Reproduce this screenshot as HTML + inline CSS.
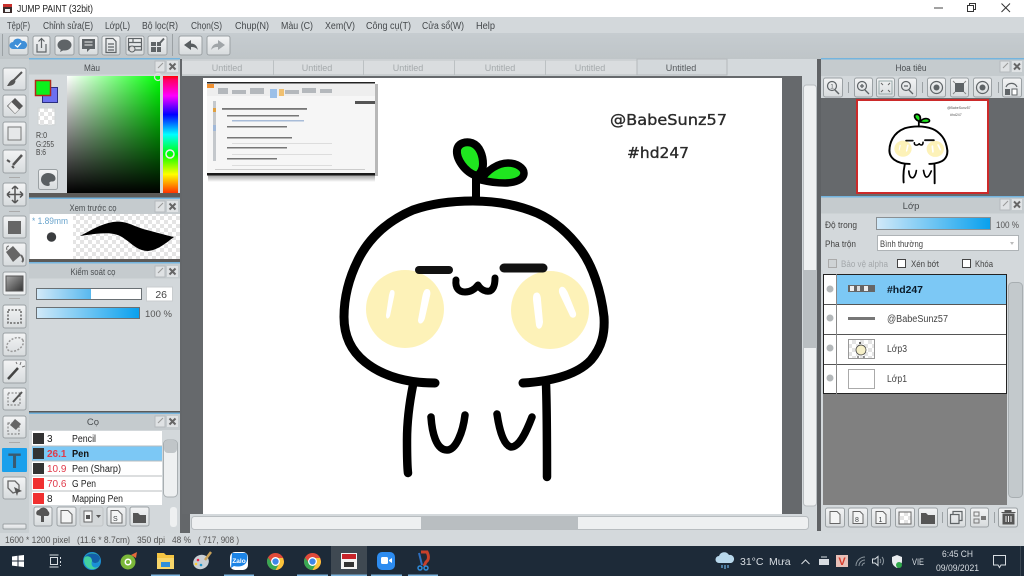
<!DOCTYPE html>
<html><head><meta charset="utf-8"><style>
html,body{margin:0;padding:0;background:#d4d9dc;overflow:hidden}
svg{display:block}
text{font-family:"Liberation Sans","Noto Sans CJK SC",sans-serif;font-size:9.5px;fill:#3c4043}
.b{fill:url(#btn);stroke:#9ba1a4;stroke-width:1}
.i{fill:#5f6467;stroke:none}
.s{fill:none;stroke:#5f6467;stroke-width:1.2}
.h{text-anchor:middle;fill:#4a4e51;font-size:9.5px}
.sep{stroke:#9ba1a4;stroke-width:1}
.tab{fill:#a4a9ab;text-anchor:middle;font-size:9px}
.m{font-size:10px;fill:#44484b}
.l{font-size:10px;fill:#222}
</style></head><body>
<svg width="1024" height="576" viewBox="0 0 1024 576" xmlns="http://www.w3.org/2000/svg">
<defs>
<linearGradient id="btn" x1="0" y1="0" x2="0" y2="1"><stop offset="0" stop-color="#f3f4f5"/><stop offset="1" stop-color="#d7dbdd"/></linearGradient>
<linearGradient id="tb" x1="0" y1="0" x2="0" y2="1"><stop offset="0" stop-color="#c6ccd0"/><stop offset="1" stop-color="#bfc5c8"/></linearGradient>
<linearGradient id="wg" x1="0" y1="0" x2="1" y2="0"><stop offset="0" stop-color="#fff"/><stop offset="1" stop-color="#00ff06"/></linearGradient>
<linearGradient id="bk" x1="0" y1="0" x2="0" y2="1"><stop offset="0" stop-color="#000" stop-opacity="0"/><stop offset="1" stop-color="#000"/></linearGradient>
<linearGradient id="hue" x1="0" y1="0" x2="0" y2="1"><stop offset="0" stop-color="#f00"/><stop offset=".03" stop-color="#ff0060"/><stop offset=".17" stop-color="#f0f"/><stop offset=".33" stop-color="#00f"/><stop offset=".5" stop-color="#0ff"/><stop offset=".67" stop-color="#0f0"/><stop offset=".84" stop-color="#ff0"/><stop offset="1" stop-color="#f30"/></linearGradient>
<linearGradient id="sl" x1="0" y1="0" x2="1" y2="0"><stop offset="0" stop-color="#d2e9f8"/><stop offset="1" stop-color="#08a0ee"/></linearGradient>
<linearGradient id="sl2" x1="0" y1="0" x2="1" y2="0"><stop offset="0" stop-color="#d2e9f8"/><stop offset="1" stop-color="#58b8ee"/></linearGradient>
<linearGradient id="gr" x1="0" y1="0" x2="1" y2="1"><stop offset="0" stop-color="#aaa"/><stop offset="1" stop-color="#333"/></linearGradient>
<linearGradient id="sh" x1="0" y1="0" x2="0" y2="1"><stop offset="0" stop-color="#000" stop-opacity=".5"/><stop offset="1" stop-color="#000" stop-opacity="0"/></linearGradient>
<pattern id="ck" width="8" height="8" patternUnits="userSpaceOnUse"><rect width="8" height="8" fill="#fff"/><rect width="4" height="4" fill="#e4e4e4"/><rect x="4" y="4" width="4" height="4" fill="#e4e4e4"/></pattern>
<g id="art">
<circle cx="405" cy="309" r="39" fill="#fdf2b8"/><circle cx="550" cy="310" r="39" fill="#fdf2b8"/>
<g fill="#fff"><path d="M392 290C395 290 395 293 394 297L390 316C388 320 386 319 386 315L389 295C390 292 390 290 392 290Z"/><path d="M427 289C430 289 431 292 430 296L425 318C423 325 418 325 418 320L422 298C423 293 424 289 427 289Z"/><path d="M535 293C539 291 541 295 541 300L543 322C542 331 537 330 536 325L533 300C533 297 533 294 535 293Z"/><path d="M561 287C564 286 566 289 568 293L576 313C577 318 572 319 570 316L560 295C558 291 559 288 561 287Z"/></g>
<g fill="none" stroke="#000" stroke-linecap="round" stroke-linejoin="round">
<path d="M435 383C410 383 385 378 365 362C350 350 344 335 344 317C344 300 348 280 358 260C368 240 385 222 413 210C433 203 453 201 473 201C497 201 518 205 537 213C555 221 570 235 581 250C592 265 601 290 604 317C605 333 602 347 591 360C578 374 555 381 523 383" stroke-width="9"/>
<path d="M476 201L476 178" stroke-width="8"/>
<path d="M477 176C464 172 456 158 457 150C458 143 466 141 472 143C480 146 483 156 483 164C483 169 481 173 477 176Z" fill="#1fe61f" stroke-width="8"/>
<path d="M481 180C487 170 498 163 508 163C517 163 524 168 524 173C524 180 514 183 505 183C497 183 489 182 481 180Z" fill="#1fe61f" stroke-width="7.500"/>
<path d="M419 270H449" stroke="#111" stroke-width="8"/><path d="M504 268H543" stroke="#111" stroke-width="9"/>
<path d="M456 280C455 288 459 292 465 292C471 292 475 289 478 285C481 290 486 292 490 291C494 289 495 283 495 278" stroke-width="7"/>
<path d="M413 385C409 405 407 425 407 440C407 455 407 465 408 473" stroke-width="8.5"/>
<path d="M546 384C547 410 547 445 547 477" stroke-width="8.5"/>
<path d="M431 417C432 432 436 450 447 450C456 450 463 432 465 415" stroke-width="7.5"/>
<path d="M497 414C499 428 503 445 511 447C520 447 527 430 532 417" stroke-width="7.5"/>
</g></g>
</defs>

<!-- base -->
<rect width="1024" height="576" fill="#d4d9dc"/>
<rect width="1024" height="17" fill="#fff"/>
<rect y="17" width="1024" height="16" fill="#d3d8db"/>
<rect y="33" width="1024" height="26" fill="url(#tb)"/>

<!-- title -->
<rect x="3" y="4" width="9" height="9" fill="#3a2b2b"/><rect x="3" y="4" width="9" height="3" fill="#c9302c"/><rect x="5" y="9" width="5" height="3" fill="#eee"/>
<text x="17" y="12" style="font-size:10.5px;fill:#222" textLength="76" lengthAdjust="spacingAndGlyphs">JUMP PAINT (32bit)</text>
<path d="M934 8H943" stroke="#444" stroke-width="1"/>
<path d="M967.5 5.5H973.5V11.5H967.5ZM969.5 5.5V3.5H975.5V9.5H973.5" fill="none" stroke="#333" stroke-width="1"/>
<path d="M1001.5 3.5L1010 12M1010 3.5L1001.5 12" stroke="#333" stroke-width="1"/>

<!-- menu -->
<g>
<text class="m" x="7" y="29" textLength="23" lengthAdjust="spacingAndGlyphs">Tệp(F)</text><text class="m" x="43" y="29" textLength="50" lengthAdjust="spacingAndGlyphs">Chỉnh sửa(E)</text><text class="m" x="105" y="29" textLength="25" lengthAdjust="spacingAndGlyphs">Lớp(L)</text><text class="m" x="142" y="29" textLength="36" lengthAdjust="spacingAndGlyphs">Bộ lọc(R)</text><text class="m" x="191" y="29" textLength="31" lengthAdjust="spacingAndGlyphs">Chọn(S)</text><text class="m" x="235" y="29" textLength="34" lengthAdjust="spacingAndGlyphs">Chụp(N)</text><text class="m" x="281" y="29" textLength="32" lengthAdjust="spacingAndGlyphs">Màu (C)</text><text class="m" x="325" y="29" textLength="30" lengthAdjust="spacingAndGlyphs">Xem(V)</text><text class="m" x="366" y="29" textLength="45" lengthAdjust="spacingAndGlyphs">Công cụ(T)</text><text class="m" x="422" y="29" textLength="42" lengthAdjust="spacingAndGlyphs">Cửa sổ(W)</text><text class="m" x="476" y="29" textLength="19" lengthAdjust="spacingAndGlyphs">Help</text>
</g>

<!-- top toolbar -->
<path d="M2.5 34V56M172.5 34V56" class="sep"/>
<rect class="b" x="9" y="36" width="19" height="19" rx="2"/><path d="M13 49a3.5 3.5 0 0 1 0-7 5 5 0 0 1 9-1 4 4 0 0 1 2 8Z" fill="#3f8fd8"/><path d="M15 45l2.500 2 3.500-4" stroke="#fff" fill="none" stroke-width="1.300"/>
<rect class="b" x="33" y="36" width="17" height="19" rx="2"/><path d="M37 44V52H46V44M41.500 48V39M38.500 41.500L41.500 38.500L44.500 41.500" class="s"/>
<rect class="b" x="55" y="36" width="19" height="19" rx="2"/><ellipse cx="64.500" cy="45" rx="7" ry="5.500" class="i"/><path d="M61 49l-1 3 4-2Z" class="i"/>
<rect class="b" x="79" y="36" width="19" height="19" rx="2"/><path d="M82 39H95V49H90L87 52V49H82Z" class="i"/><path d="M84.500 42H92.500M84.500 45H92.500" stroke="#eee"/>
<rect class="b" x="102" y="36" width="18" height="19" rx="2"/><path d="M106 38.500H113L116 41.500V52.500H106Z M108 44H114M108 47H114M108 50H114" class="s"/>
<rect class="b" x="126" y="36" width="18" height="19" rx="2"/><path d="M128.500 38.500H141.500V50H128.500ZM128.500 42.500H141.500M128.500 46.500H141.500M133 38.500V42.500" class="s"/><circle cx="132" cy="49" r="3" fill="#ddd" stroke="#5f6467"/>
<rect class="b" x="148" y="36" width="19" height="19" rx="2"/><path d="M151 42H156V46H151ZM157 42H161V46H157ZM151 47H156V52H151ZM157 47H161V52H157Z" class="i"/><path d="M159 44L164 38.500" stroke="#5f6467" stroke-width="2"/>
<rect class="b" x="179" y="36" width="23" height="19" rx="2"/><path d="M184 45L191 40V43.500C195 43.500 197 46 198 50C196 47.500 194 47 191 47V50Z" fill="#585d60"/>
<rect class="b" x="207" y="36" width="23" height="19" rx="2"/><path d="M225 45L218 40V43.500C214 43.500 212 46 211 50C213 47.500 215 47 218 47V50Z" fill="#a0a5a8"/>

<!-- left tools col -->
<rect x="0" y="59" width="29" height="474" fill="#c9cfd2"/>
<rect class="b" x="3" y="68" width="23" height="22" rx="2"/><path d="M22 72L13 81" stroke="#555" stroke-width="2"/><path d="M14 79C10 80 9 83 7 86C11 86 15 85 15.500 81Z" fill="#555"/>
<rect class="b" x="3" y="95" width="23" height="22" rx="2"/><path d="M15 98L23 106L15 114L7 106Z" fill="#555"/><path d="M11.500 102L19 109.500L15 113.500L8 106Z" fill="#eee"/>
<rect class="b" x="3" y="122" width="23" height="23" rx="2"/><rect x="8" y="127" width="13" height="13" fill="#e6e8e9" stroke="#777"/>
<rect class="b" x="3" y="150" width="23" height="23" rx="2"/><path d="M22 155L13 165" stroke="#555" stroke-width="2.500"/><path d="M7 160l3 2M12 166l2 2" stroke="#555" stroke-width="2"/>
<path d="M9 177.500H20" stroke="#aaa"/>
<rect class="b" x="3" y="183" width="23" height="23" rx="2"/><path d="M15 186V203M7 194.500H23M15 186l-3 3M15 186l3 3M15 203l-3-3M15 203l3-3M7 194.500l3-3M7 194.500l3 3M23 194.500l-3-3M23 194.500l-3 3" stroke="#555" fill="none" stroke-width="1.500"/>
<path d="M9 211.500H20" stroke="#aaa"/>
<rect class="b" x="3" y="216" width="23" height="22" rx="2"/><rect x="8" y="221" width="13" height="13" fill="#666"/>
<rect class="b" x="3" y="243" width="23" height="23" rx="2"/><path d="M6 252L13 246L21 255L13 262Z" fill="#666"/><path d="M21 255C23 258 24 260 22 262" stroke="#666" fill="none" stroke-width="2"/><path d="M9 246C7 246 6 248 7 250" stroke="#666" fill="none"/>
<rect class="b" x="3" y="272" width="23" height="23" rx="2" style="fill:#eef0f1"/><rect x="6" y="276" width="17" height="15" fill="url(#gr)" stroke="#555"/>
<path d="M9 298.500H20" stroke="#aaa"/>
<rect class="b" x="3" y="305" width="23" height="23" rx="2"/><rect x="8" y="310" width="13" height="13" fill="none" stroke="#666" stroke-dasharray="2 1.500" stroke-width="1.500"/>
<rect class="b" x="3" y="333" width="23" height="23" rx="2"/><ellipse cx="15" cy="344.500" rx="9" ry="6" transform="rotate(-30 15 344.500)" fill="none" stroke="#999" stroke-dasharray="2 1.500" stroke-width="1.500"/>
<rect class="b" x="3" y="360" width="23" height="23" rx="2"/><path d="M8 379L18 368" stroke="#444" stroke-width="2.500"/><path d="M20 365l1-3M22 367l3-1M17 364l-1-2" stroke="#777"/>
<rect class="b" x="3" y="388" width="23" height="22" rx="2"/><rect x="8" y="393" width="12" height="12" fill="none" stroke="#777" stroke-dasharray="2 1.500"/><path d="M13 402L22 392" stroke="#555" stroke-width="2"/>
<rect class="b" x="3" y="416" width="23" height="22" rx="2"/><rect x="8" y="423" width="11" height="11" fill="none" stroke="#777" stroke-dasharray="2 1.500"/><path d="M15 419L21 424L16 430L10 425Z" fill="#666"/>
<path d="M9 442.500H20" stroke="#aaa"/>
<rect x="2" y="448" width="25" height="24" rx="1" fill="#1aa0ec"/><text x="14.500" y="468" text-anchor="middle" style="font-size:21px;fill:#3a5a70;font-weight:bold">T</text>
<rect class="b" x="3" y="477" width="23" height="22" rx="2"/><path d="M8 481H15L19 485V491L13 493L8 488Z" fill="none" stroke="#666" stroke-width="1.300"/><path d="M14 487L22 491L18 492.500L17 496Z" fill="#555"/>
<rect class="b" x="3" y="524" width="23" height="5" rx="1"/>

<!-- dark gutter -->
<rect x="180" y="59" width="10" height="474" fill="#64676a"/>

<!-- panels background -->
<rect x="29" y="59" width="151" height="474" fill="#d3d8db"/>
<rect x="29" y="58" width="151" height="1.500" fill="#74b4de"/>
<rect x="29" y="59.500" width="151" height="15" fill="#c5cbce"/>
<text class="h" x="92" y="71" textLength="16" lengthAdjust="spacingAndGlyphs">Màu</text>
<rect x="155" y="61" width="10" height="11" fill="#dfe2e4" stroke="#b5babd"/><path d="M158 68L163 63" stroke="#999"/>
<rect x="167" y="61" width="11" height="11" fill="#dfe2e4"/><path d="M169.500 63.500L175.500 69.500M175.500 63.500L169.500 69.500" stroke="#666" stroke-width="2"/>
<rect x="67" y="76" width="93" height="117" fill="url(#wg)"/><rect x="67" y="76" width="93" height="117" fill="url(#bk)"/>
<rect x="163" y="76" width="15" height="117" fill="url(#hue)"/>
<circle cx="170" cy="154" r="4" fill="none" stroke="#eee" stroke-width="1.500"/>
<circle cx="158" cy="77" r="3.500" fill="none" stroke="#ddd" stroke-width="1.300"/>
<rect x="42.500" y="87.500" width="15" height="15" fill="#6c70f0" stroke="#2a2e80"/>
<rect x="35.500" y="80.500" width="15" height="15" fill="#0cf01c" stroke="#b02818" stroke-width="1.500"/>
<rect x="38" y="108" width="17" height="17" fill="url(#ck)" stroke="#cfd3d5"/>
<text x="36" y="138" style="font-size:8.5px;fill:#444" textLength="11" lengthAdjust="spacingAndGlyphs">R:0</text><text x="36" y="147" style="font-size:8.5px;fill:#444" textLength="18" lengthAdjust="spacingAndGlyphs">G:255</text><text x="36" y="155" style="font-size:8.5px;fill:#444" textLength="10" lengthAdjust="spacingAndGlyphs">B:6</text>
<rect class="b" x="38.500" y="169.500" width="19" height="20" rx="2"/><path d="M48 173a7 6.500 0 1 0 0 13c2 0 2-1.500 1.500-2.500c-.5-1.500 1-2 2.500-2c2 0 3.500-1 3.500-3c0-3.500-3.500-5.500-7.500-5.500Z" fill="#5a5f62"/>

<!-- preview brush -->
<rect x="29" y="193" width="151" height="4.500" fill="#5c5a58"/><rect x="29" y="197.500" width="151" height="1.500" fill="#74b4de"/>
<rect x="29" y="199" width="151" height="15" fill="#c5cbce"/>
<text class="h" x="93" y="211" textLength="47" lengthAdjust="spacingAndGlyphs">Xem trước cọ</text>
<rect x="155" y="201" width="10" height="11" fill="#dfe2e4" stroke="#b5babd"/><path d="M158 208L163 203" stroke="#999"/>
<rect x="167" y="201" width="11" height="11" fill="#dfe2e4"/><path d="M169.500 203.500L175.500 209.500M175.500 203.500L169.500 209.500" stroke="#666" stroke-width="2"/>
<rect x="30" y="214" width="43" height="45" fill="#fff"/>
<rect x="73" y="214" width="107" height="45" fill="url(#ck)"/>
<text x="32" y="224" style="font-size:9px;fill:#6aa4cc" textLength="36" lengthAdjust="spacingAndGlyphs">* 1.89mm</text>
<circle cx="51.500" cy="237" r="4.700" fill="#3a3c3e"/>
<path d="M80 236C90 231 100 224 113 222C125 220 133 226 143 229C155 232 165 235 174 237C166 243 158 250 148 251C136 251 130 241 120 236C110 231 95 234 80 236Z" fill="#000"/>

<!-- brush control -->
<rect x="29" y="259" width="151" height="3" fill="#5c5a58"/><rect x="29" y="262" width="151" height="1.500" fill="#74b4de"/>
<rect x="29" y="263.500" width="151" height="15" fill="#c5cbce"/>
<text class="h" x="93" y="275" textLength="45" lengthAdjust="spacingAndGlyphs">Kiểm soát cọ</text>
<rect x="155" y="266" width="10" height="11" fill="#dfe2e4" stroke="#b5babd"/><path d="M158 273L163 268" stroke="#999"/>
<rect x="167" y="266" width="11" height="11" fill="#dfe2e4"/><path d="M169.500 268.500L175.500 274.500M175.500 268.500L169.500 274.500" stroke="#666" stroke-width="2"/>
<rect x="36.500" y="288.500" width="105" height="11" fill="#fff" stroke="#6a7074"/><rect x="37" y="289" width="54" height="10" fill="url(#sl2)"/>
<rect x="146.500" y="287" width="26" height="14" fill="#fff" stroke="#c9cdcf"/><text x="167" y="298" text-anchor="end" style="font-size:10.500px;fill:#444">26</text>
<rect x="36.500" y="307.500" width="103" height="11" fill="url(#sl)" stroke="#6a7074"/>
<text x="145" y="317" style="font-size:9.500px;fill:#555" textLength="27" lengthAdjust="spacingAndGlyphs">100 %</text>

<!-- brushes -->
<rect x="29" y="411" width="151" height="1.500" fill="#5c5a58"/><rect x="29" y="412.500" width="151" height="1.500" fill="#74b4de"/>
<rect x="29" y="414" width="151" height="16" fill="#c5cbce"/>
<text class="h" x="93" y="425">Cọ</text>
<rect x="155" y="416" width="10" height="11" fill="#dfe2e4" stroke="#b5babd"/><path d="M158 423L163 418" stroke="#999"/>
<rect x="167" y="416" width="11" height="11" fill="#dfe2e4"/><path d="M169.500 418.500L175.500 424.500M175.500 418.500L169.500 424.500" stroke="#666" stroke-width="2"/>
<rect x="32" y="431" width="130" height="74" fill="#fff"/>
<rect x="32" y="446" width="130" height="15" fill="#7cc8f5"/>
<path d="M32 446H162M32 461H162M32 476H162M32 491H162" stroke="#b9bdbf"/>
<rect x="33" y="433" width="11" height="11" fill="#333"/><rect x="33" y="448" width="11" height="11" fill="#333"/><rect x="33" y="463" width="11" height="11" fill="#333"/><rect x="33" y="478" width="11" height="11" fill="#f03030"/><rect x="33" y="493" width="11" height="11" fill="#f03030"/>
<text x="47" y="442" class="l">3</text><text x="72" y="442" class="l" textLength="24" lengthAdjust="spacingAndGlyphs">Pencil</text>
<text x="47" y="457" style="font-size:10px;fill:#e03a4a;font-weight:bold">26.1</text><text x="72" y="457" style="font-size:10px;fill:#111;font-weight:bold" textLength="17" lengthAdjust="spacingAndGlyphs">Pen</text>
<text x="47" y="472" style="font-size:10px;fill:#e03a4a">10.9</text><text x="72" y="472" class="l" textLength="49" lengthAdjust="spacingAndGlyphs">Pen (Sharp)</text>
<text x="47" y="487" style="font-size:10px;fill:#e03a4a">70.6</text><text x="72" y="487" class="l" textLength="24" lengthAdjust="spacingAndGlyphs">G Pen</text>
<text x="47" y="502" class="l">8</text><text x="72" y="502" class="l" textLength="51" lengthAdjust="spacingAndGlyphs">Mapping Pen</text>
<rect x="163.500" y="440" width="14" height="57" rx="4" fill="#eef0f1" stroke="#a8aeb1"/><rect x="164" y="440" width="13" height="13" rx="4" fill="#c0c5c8"/>
<rect x="170" y="507" width="7" height="20" rx="3" fill="#eef0f1"/>
<rect class="b" x="34" y="507" width="18" height="19" rx="2"/><path d="M37 515a3 3 0 0 1 2-5a5 5 0 0 1 9 1a3 3 0 0 1 0 5H44V522H41V516Z" fill="#555"/>
<rect class="b" x="57" y="507" width="19" height="19" rx="2"/><path d="M61 510.500H68L72 514.500V523H61Z" fill="#f4f5f5" stroke="#666"/>
<rect class="b" x="80" y="507" width="23" height="19" rx="2" style="fill:#d3d7d9;stroke:#c0c4c6"/><path d="M84 511H92V522H84Z" fill="#f4f5f5" stroke="#666"/><rect x="86" y="515" width="4" height="4" fill="#555"/><path d="M96 515H101L98.500 518Z" fill="#555"/>
<rect class="b" x="107" y="507" width="19" height="19" rx="2"/><path d="M111 510.500H118L122 514.500V523H111Z" fill="#f4f5f5" stroke="#666"/><text x="113" y="521" style="font-size:7px">S</text>
<rect class="b" x="130" y="507" width="19" height="19" rx="2"/><path d="M133 513H138L140 515H146V523H133Z" fill="#555"/>

<!-- status bar -->
<rect x="0" y="533" width="1024" height="13" fill="#d4d9dc"/>
<text x="5" y="543" style="font-size:9.500px;fill:#555" textLength="65" lengthAdjust="spacingAndGlyphs">1600 * 1200 pixel</text><text x="77" y="543" style="font-size:9.500px;fill:#555" textLength="53" lengthAdjust="spacingAndGlyphs">(11.6 * 8.7cm)</text><text x="137" y="543" style="font-size:9.500px;fill:#555" textLength="28" lengthAdjust="spacingAndGlyphs">350 dpi</text><text x="172" y="543" style="font-size:9.500px;fill:#555" textLength="19" lengthAdjust="spacingAndGlyphs">48 %</text><text x="198" y="543" style="font-size:9.500px;fill:#555" textLength="41" lengthAdjust="spacingAndGlyphs">( 717, 908 )</text>

<!-- tabs -->
<rect x="182" y="59" width="636" height="17" fill="#d4d9dc"/>
<rect x="182" y="60" width="455" height="15" fill="#dadddf"/>
<path d="M273.500 60V75M363.500 60V75M454.500 60V75M545.500 60V75" stroke="#bcc1c3"/>
<path d="M182 60H637" stroke="#c3c8ca"/><path d="M182 75H637" stroke="#b9bec0"/>
<rect x="637" y="59" width="90" height="16" fill="#d3d8db" stroke="#b4b9bb"/>
<text class="tab" x="227" y="71">Untitled</text><text class="tab" x="317" y="71">Untitled</text><text class="tab" x="408" y="71">Untitled</text><text class="tab" x="500" y="71">Untitled</text><text class="tab" x="590" y="71">Untitled</text><text class="tab" x="681" y="71" style="fill:#55595c">Untitled</text>

<!-- canvas area -->
<rect x="182" y="76" width="620" height="441" fill="#66696c"/>
<rect x="203" y="78" width="579" height="436" fill="#fff"/>
<!-- sticker -->
<rect x="208" y="173" width="167" height="9" fill="url(#sh)"/>
<rect x="375" y="84" width="3" height="92" fill="#888" opacity=".6"/>
<rect x="207" y="82" width="168" height="93" fill="#f6f6f6"/>
<rect x="207" y="82" width="168" height="1.500" fill="#222"/><rect x="207" y="173" width="168" height="2.500" fill="#1a1a1a"/>
<rect x="207" y="84" width="168" height="12" fill="#eeeeee"/><rect x="207" y="84" width="7" height="4" fill="#f09030"/>
<g fill="#b4b8bc"><rect x="218" y="88" width="10" height="6"/><rect x="232" y="90" width="14" height="4"/><rect x="250" y="88" width="14" height="6"/><rect x="285" y="90" width="14" height="4"/><rect x="302" y="88" width="14" height="5"/><rect x="320" y="89" width="12" height="4"/></g>
<rect x="270" y="89" width="7" height="9" fill="#9cc0e8"/><rect x="279" y="89" width="5" height="7" fill="#f0c070"/>
<rect x="213" y="101" width="3" height="60" fill="#c4c8cc"/><rect x="213" y="108" width="3" height="4" fill="#e0a040"/><rect x="213" y="125" width="3" height="6" fill="#a0b8d8"/>
<rect x="355" y="101" width="20" height="3" fill="#555"/>
<g fill="#777"><rect x="222" y="108" width="85" height="1.800"/><rect x="227" y="115" width="72" height="1.500"/><rect x="232" y="120" width="72" height="1.500" fill="#a8bcd8"/><rect x="227" y="126" width="60" height="1.500"/><rect x="227" y="137" width="65" height="1.500"/><rect x="227" y="147" width="60" height="1.500"/><rect x="227" y="158" width="50" height="1.500"/></g>
<g fill="#ddd"><rect x="232" y="143" width="100" height="1"/><rect x="232" y="154" width="100" height="1"/><rect x="232" y="165" width="100" height="1"/></g>
<rect x="215" y="169" width="150" height="1" fill="#ccc"/>
<text x="610" y="125" style="font-size:15.500px;fill:#2a2a2a;stroke:#2a2a2a;stroke-width:.35;font-family:'DejaVu Sans',sans-serif" textLength="117" lengthAdjust="spacingAndGlyphs">@BabeSunz57</text>
<text x="627" y="158" style="font-size:15.500px;fill:#2a2a2a;stroke:#2a2a2a;stroke-width:.35;font-family:'DejaVu Sans',sans-serif" textLength="62" lengthAdjust="spacingAndGlyphs">#hd247</text>
<use href="#art"/>

<!-- v scrollbar -->
<rect x="802" y="76" width="16" height="455" fill="#d4d9dc"/>
<rect x="803.500" y="85" width="13" height="421" rx="3" fill="#eef0f1" stroke="#b8bdc0"/>
<rect x="804" y="270" width="12" height="78" fill="#b9bec1"/>
<!-- h scrollbar -->
<rect x="182" y="514" width="636" height="19" fill="#d4d9dc"/>
<rect x="191.500" y="516.500" width="617" height="13" rx="3" fill="#eef0f1" stroke="#b8bdc0"/>
<rect x="421" y="517" width="157" height="12" fill="#b9bec1"/>
<rect x="180" y="514" width="10" height="19" fill="#64676a"/>
<rect x="817" y="59" width="4" height="472" fill="#5f6265"/>

<!-- right panel -->
<rect x="821" y="59" width="203" height="474" fill="#d3d8db"/>
<rect x="821" y="58" width="203" height="1.500" fill="#74b4de"/>
<rect x="821" y="59.500" width="203" height="17" fill="#c5cbce"/>
<text class="h" x="911" y="71" textLength="31" lengthAdjust="spacingAndGlyphs">Hoa tiêu</text>
<rect x="1000" y="61" width="10" height="11" fill="#dfe2e4" stroke="#b5babd"/><path d="M1003 68L1008 63" stroke="#999"/>
<rect x="1012" y="61" width="10" height="11" fill="#dfe2e4"/><path d="M1014 63.500L1020 69.500M1020 63.500L1014 69.500" stroke="#666" stroke-width="2"/>
<rect x="821" y="76" width="203" height="22" fill="#d3d8db"/>
<rect class="b" x="823.500" y="78" width="19" height="19" rx="2"/><circle cx="832" cy="86" r="4.500" class="s"/><path d="M835 90L839 94" stroke="#5f6467" stroke-width="1.500"/><text x="830.300" y="88.500" style="font-size:6.500px;fill:#5f6467">1</text>
<path d="M848.500 82V93M922.500 82V93M998.500 82V93" class="sep"/>
<rect class="b" x="854.500" y="78" width="18" height="19" rx="2"/><circle cx="862" cy="86" r="4.500" class="s"/><path d="M865 90L869 94M860 86H864M862 84V88" stroke="#5f6467" stroke-width="1.300"/>
<rect class="b" x="876.500" y="78" width="18" height="19" rx="2"/><rect x="879" y="81" width="13" height="13" fill="none" stroke="#9aa"/><path d="M881 83l2 2M890 83l-2 2M881 92l2-2M890 92l-2-2" stroke="#666"/>
<rect class="b" x="898.500" y="78" width="18" height="19" rx="2"/><circle cx="906" cy="86" r="4.500" class="s"/><path d="M909 90L913 94M904 86H908" stroke="#5f6467" stroke-width="1.300"/>
<rect class="b" x="927.500" y="78" width="18" height="19" rx="2"/><circle cx="936.500" cy="87.500" r="6" class="s" stroke-width="1.500"/><circle cx="936.500" cy="87.500" r="3" class="i"/>
<rect class="b" x="950.500" y="78" width="18" height="19" rx="2"/><rect x="955" y="83" width="9" height="9" class="i"/><path d="M953 81l2 2M966 81l-2 2M953 94l2-2M966 94l-2-2" stroke="#888"/>
<rect class="b" x="973.500" y="78" width="18" height="19" rx="2"/><circle cx="982.500" cy="87.500" r="6" class="s" stroke-width="1.500"/><circle cx="982.500" cy="87.500" r="3" class="i"/>
<rect class="b" x="1002.500" y="78" width="19" height="19" rx="2"/><path d="M1006 87a6 6 0 0 1 11 0" class="s"/><rect x="1005" y="89" width="5" height="6" class="i"/><rect x="1012" y="89" width="5" height="6" fill="#fff" stroke="#5f6467"/>
<rect x="821" y="98" width="203" height="98" fill="#66696c"/>
<rect x="857" y="100" width="131" height="93" fill="#fff" stroke="#cc2a2a" stroke-width="2"/>
<g transform="translate(858 101) scale(.2228 .2064) translate(-203 -78)"><use href="#art"/></g>
<text x="947" y="109" style="font-size:3.500px;fill:#555">@BabeSunz57</text><text x="950" y="116" style="font-size:3.500px;fill:#555">#hd247</text>
<rect x="821" y="196" width="203" height="1.500" fill="#74b4de"/>
<rect x="821" y="197.500" width="203" height="16" fill="#c5cbce"/>
<text class="h" x="911" y="209">Lớp</text>
<rect x="1000" y="199" width="10" height="11" fill="#dfe2e4" stroke="#b5babd"/><path d="M1003 206L1008 201" stroke="#999"/>
<rect x="1012" y="199" width="10" height="11" fill="#dfe2e4"/><path d="M1014 201.500L1020 207.500M1020 201.500L1014 207.500" stroke="#666" stroke-width="2"/>
<text x="825" y="228" style="font-size:9.500px;fill:#444" textLength="32" lengthAdjust="spacingAndGlyphs">Độ trong</text>
<rect x="876.500" y="217.500" width="114" height="12" fill="url(#sl)" stroke="#8a9094"/>
<text x="996" y="228" style="font-size:9.500px;fill:#555" textLength="23" lengthAdjust="spacingAndGlyphs">100 %</text>
<text x="825" y="247" style="font-size:9.500px;fill:#444" textLength="31" lengthAdjust="spacingAndGlyphs">Pha trộn</text>
<rect x="877.500" y="235.500" width="141" height="15" fill="#fff" stroke="#aeb3b6"/>
<text x="880" y="247" style="font-size:9.500px;fill:#444" textLength="43" lengthAdjust="spacingAndGlyphs">Bình thường</text>
<path d="M1010 242H1014L1012 245Z" fill="#bbb"/>
<rect x="828.500" y="259.500" width="8" height="8" fill="#cfd3d5" stroke="#aaa"/><text x="841" y="267" style="font-size:9.500px;fill:#a4a8ab" textLength="47" lengthAdjust="spacingAndGlyphs">Bảo vệ alpha</text>
<rect x="897.500" y="259.500" width="8" height="8" fill="#fff" stroke="#444"/><text x="911" y="267" style="font-size:9.500px;fill:#444" textLength="28" lengthAdjust="spacingAndGlyphs">Xén bớt</text>
<rect x="962.500" y="259.500" width="8" height="8" fill="#fff" stroke="#444"/><text x="975" y="267" style="font-size:9.500px;fill:#444" textLength="18" lengthAdjust="spacingAndGlyphs">Khóa</text>

<!-- layer list -->
<rect x="823" y="274" width="184" height="231" fill="#808080"/>
<rect x="823" y="274" width="184" height="120" fill="#fff"/>
<rect x="837" y="274" width="170" height="30" fill="#7cc8f5"/>
<path d="M823 304.500H1007M823 334.500H1007M823 364.500H1007" stroke="#555"/>
<rect x="823.500" y="274.500" width="183" height="119" fill="none" stroke="#222"/>
<path d="M836.500 274V394" stroke="#888"/>
<circle cx="830" cy="289" r="3.500" fill="#b4b8ba"/><circle cx="830" cy="318" r="3.500" fill="#b4b8ba"/><circle cx="830" cy="348" r="3.500" fill="#b4b8ba"/><circle cx="830" cy="378" r="3.500" fill="#b4b8ba"/>
<rect x="848" y="285" width="27" height="7" fill="#666"/><rect x="850" y="286" width="4" height="5" fill="#eee"/><rect x="857" y="286" width="3" height="5" fill="#ddd"/><rect x="864" y="286" width="4" height="5" fill="#eee"/>
<rect x="848" y="317" width="27" height="3" fill="#777"/>
<rect x="848.500" y="339.500" width="26" height="19" fill="url(#ck)" stroke="#999"/><circle cx="861" cy="350" r="5" fill="#f6f0c8" stroke="#333" stroke-width=".7"/><path d="M858 358V356M864 358V356" stroke="#333"/><circle cx="860" cy="343" r="1" fill="#333"/>
<rect x="848.500" y="369.500" width="26" height="19" fill="#fff" stroke="#aaa"/>
<text x="887" y="293" style="font-size:10px;fill:#0a1a28;font-weight:bold" textLength="36" lengthAdjust="spacingAndGlyphs">#hd247</text>
<text x="887" y="322" style="font-size:10px;fill:#444" textLength="61" lengthAdjust="spacingAndGlyphs">@BabeSunz57</text>
<text x="887" y="352" style="font-size:10px;fill:#444" textLength="20" lengthAdjust="spacingAndGlyphs">Lớp3</text>
<text x="887" y="382" style="font-size:10px;fill:#444" textLength="20" lengthAdjust="spacingAndGlyphs">Lớp1</text>
<rect x="1008.500" y="282.500" width="14" height="215" rx="4" fill="#c3c9cc" stroke="#a8aeb1"/>

<rect class="b" x="825.500" y="508" width="19" height="19" rx="2"/><path d="M830 511.500H837L840 514.500V523.500H830Z" fill="#f4f5f5" stroke="#666"/>
<rect class="b" x="848.500" y="508" width="19" height="19" rx="2"/><path d="M853 511.500H860L863 514.500V523.500H853Z" fill="#f4f5f5" stroke="#666"/><text x="855" y="522" style="font-size:7px">8</text>
<rect class="b" x="871.500" y="508" width="19" height="19" rx="2"/><path d="M876 511.500H883L886 514.500V523.500H876Z" fill="#f4f5f5" stroke="#666"/><text x="878.500" y="522" style="font-size:7px">1</text>
<rect class="b" x="895.500" y="508" width="19" height="19" rx="2"/><rect x="899" y="512" width="12" height="12" fill="url(#ck)" stroke="#666"/>
<rect class="b" x="918.500" y="508" width="19" height="19" rx="2"/><path d="M921 513H926L928 515H935V524H921Z" fill="#555"/>
<path d="M942.500 512V523M994.500 512V523" class="sep"/>
<rect class="b" x="947.500" y="508" width="18" height="19" rx="2"/><path d="M953 514.500V511.500H962V520.500H959M950.500 514.500H959V523.500H950.500Z" class="s"/>
<rect class="b" x="970.500" y="508" width="18" height="19" rx="2"/><rect x="974" y="512" width="5" height="4" fill="none" stroke="#777"/><rect x="974" y="519" width="5" height="4" fill="none" stroke="#777"/><rect x="981" y="516" width="5" height="4" fill="#777"/>
<rect class="b" x="998.500" y="508" width="19" height="19" rx="2"/><path d="M1003 514H1014V524H1003Z M1001.500 512.500H1015.500M1005 512V510.500H1011V512" fill="#555" stroke="#555"/><path d="M1006 516V522M1008.500 516V522M1011 516V522" stroke="#eee"/>

<!-- taskbar -->
<rect x="0" y="546" width="1024" height="30" fill="#1d2a38"/>
<rect x="331" y="546" width="36" height="30" fill="#3f4952"/>
<path d="M12 556.500L17.500 555.800V560.500H12ZM18.500 555.600L24 555V560.500H18.500ZM12 561.500H17.500V566.300L12 565.600ZM18.500 561.500H24V567L18.500 566.400Z" fill="#fff"/>
<path d="M49.500 555H58.500M49.500 567H58.500M50.500 557.500H57.500V564.500H50.500ZM60.500 557V559M60.500 561V563M60.500 565V566" stroke="#d8dde2" fill="none"/>
<!-- edge -->
<circle cx="92" cy="561" r="9" fill="#1b8fd6"/><path d="M84 559C86 552 97 550 100 558C101 564 93 564 92 561C90 566 95 570 99 566C96 571 84 571 84 559Z" fill="#43d1a0"/><path d="M92 561C93 564 100 564 100 558C98 552 88 552 85 557C88 555 92 557 92 561Z" fill="#135fa8"/>
<!-- coccoc -->
<circle cx="128" cy="562" r="7.500" fill="#7cb83a"/><circle cx="128" cy="562" r="3.500" fill="#fff"/><circle cx="128" cy="562" r="2" fill="#7cb83a"/><path d="M131 555L137 552L136 558Z" fill="#e86a3a"/>
<!-- folder -->
<path d="M157 553H164L166 555H174V569H157Z" fill="#f5c542"/><rect x="157" y="558" width="17" height="11" fill="#f8d66a"/><rect x="161" y="562" width="9" height="5" fill="#2f8fdc"/>
<!-- paint -->
<ellipse cx="201" cy="562" rx="8" ry="7" transform="rotate(-25 201 562)" fill="#c9cfd4"/><path d="M205 560L211 552" stroke="#c9a25a" stroke-width="2.500"/><circle cx="198" cy="560" r="1.300" fill="#e24"/><circle cx="201" cy="565" r="1.300" fill="#29c"/><circle cx="196" cy="564" r="1.300" fill="#fc3"/>
<!-- zalo -->
<rect x="230" y="552" width="18" height="18" rx="5" fill="#fff"/><path d="M232 553H245C248 553 248 560 246 563C243 567 237 567 234 566L231 568Z" fill="#1c84e6"/><text x="239" y="563" text-anchor="middle" style="font-size:6.500px;fill:#fff;font-weight:bold">Zalo</text>
<!-- chrome x2 -->
<g id="cr"><circle cx="275.500" cy="561.500" r="8.500" fill="#e04a3a"/><path d="M275.500 570A8.500 8.500 0 0 1 268 557.500L272 563L279 565Z" fill="#38a854"/><path d="M284 561.500A8.500 8.500 0 0 1 275.500 570L279 564L278 558H283Z" fill="#fbc43a"/><circle cx="275.500" cy="561.500" r="3.800" fill="#3d86e8" stroke="#fff" stroke-width="1.300"/></g>
<use href="#cr" x="37"/>
<!-- jump paint -->
<rect x="341" y="553" width="16" height="16" fill="#f4f4f4"/><rect x="342" y="554" width="14" height="5" fill="#c8242a"/><rect x="344" y="562" width="10" height="5" fill="#333"/>
<!-- zoom -->
<rect x="377" y="552" width="18" height="18" rx="5" fill="#2d8cf0"/><rect x="381" y="557" width="7" height="7" rx="1.500" fill="#fff"/><path d="M389 560L392 558V563L389 561Z" fill="#fff"/>
<!-- scissors -->
<path d="M421 552H427C429 556 429 560 426 562L424 566" stroke="#c8402a" stroke-width="3" fill="none"/><path d="M419 553L422 565" stroke="#2e6fc0" stroke-width="2" fill="none"/><circle cx="420" cy="568" r="2" fill="none" stroke="#2e8ad8" stroke-width="1.500"/><circle cx="426" cy="568" r="2" fill="none" stroke="#2e8ad8" stroke-width="1.500"/>
<g fill="#7fb7e0"><rect x="151" y="574.500" width="29" height="1.500"/><rect x="224" y="574.500" width="30" height="1.500"/><rect x="297" y="574.500" width="31" height="1.500"/><rect x="331" y="574.500" width="36" height="1.500"/><rect x="371" y="574.500" width="31" height="1.500"/><rect x="408" y="574.500" width="30" height="1.500"/></g>

<!-- tray -->
<path d="M719 563a3.500 3.500 0 0 1 0-7a5.500 5.500 0 0 1 10-1a4 4 0 0 1 2 8Z" fill="#b8d8ec"/><path d="M722 565v3M725 565v4M728 565v3" stroke="#6aa8d8" stroke-width="1.300"/>
<text x="740" y="565" style="font-size:10.500px;fill:#d8dde2">31°C</text><text x="769" y="565" style="font-size:10.500px;fill:#d8dde2">Mưa</text>
<path d="M801.500 564L805.500 560L809.500 564" stroke="#d8dde2" fill="none"/>
<rect x="819" y="559" width="10" height="6" fill="#d8dde2"/><path d="M821 557H827" stroke="#d8dde2"/>
<rect x="836" y="555" width="12" height="12" fill="#e8c0b8"/><text x="842" y="565" text-anchor="middle" style="font-size:11px;fill:#d83a2a;font-weight:bold">V</text>
<path d="M856 566a9 9 0 0 1 9-9M859 566a6 6 0 0 1 6-6M862 566a3 3 0 0 1 3-3" stroke="#8a949c" fill="none"/>
<path d="M872.500 559H875L878 556.500V565.500L875 563H872.500Z" fill="none" stroke="#d8dde2"/><path d="M880 559a3 3 0 0 1 0 4M882 557a6 6 0 0 1 0 8" stroke="#8a949c" fill="none"/>
<path d="M897 555L902 557V561C902 565 899 567 897 568C895 567 892 565 892 561V557Z" fill="#e8ecef"/><circle cx="899" cy="565" r="3" fill="#2ea84a"/>
<text x="912" y="565" style="font-size:9.500px;fill:#d8dde2" textLength="12" lengthAdjust="spacingAndGlyphs">VIE</text>
<text x="942" y="557" style="font-size:9.500px;fill:#d8dde2" textLength="31" lengthAdjust="spacingAndGlyphs">6:45 CH</text>
<text x="936" y="571" style="font-size:9.500px;fill:#d8dde2" textLength="43" lengthAdjust="spacingAndGlyphs">09/09/2021</text>
<path d="M993.500 555.500H1005.500V565H1001L999.500 567.500L998 565H993.500Z" fill="none" stroke="#d8dde2"/>
<path d="M1020.500 546V576" stroke="#3a4652"/>
</svg>
</body></html>
